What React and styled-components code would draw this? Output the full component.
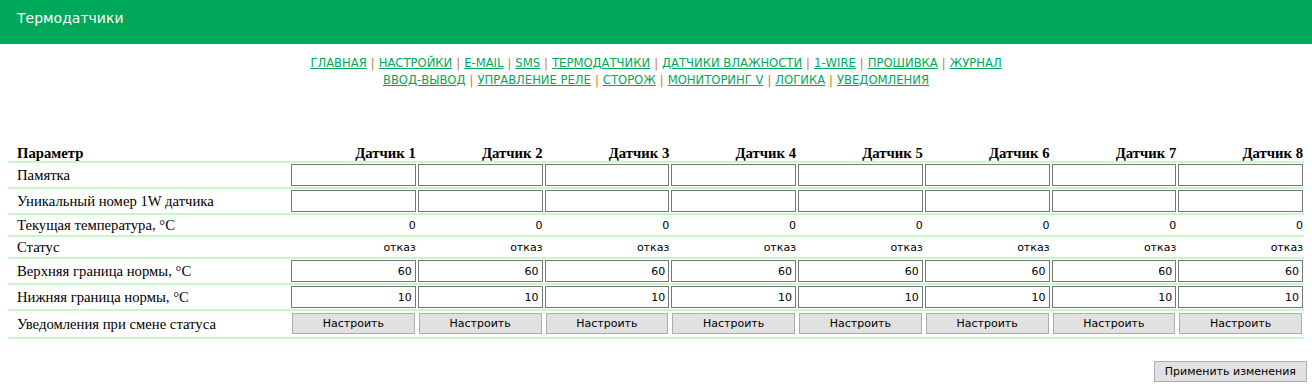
import React from 'react';
import styled, { createGlobalStyle } from 'styled-components';

const GlobalStyle = createGlobalStyle`
  body {
    margin: 0;
    background: #fff;
    font-family: "DejaVu Sans", Tahoma, sans-serif;
  }
`;

const green = '#00a85a';
const lineGreen = '#c8f8c8';

const Header = styled.div`
  height: 44px;
  background: ${green};
  color: #fff;
  font-size: 14px;
  display: flex;
  align-items: center;
  padding: 0 0 8px 17px;
  box-sizing: border-box;
`;

const Content = styled.div`
  padding: 0 8px;
`;

const Nav = styled.nav`
  margin-top: 11px;
  text-align: center;
  font-size: 11.6px;
  line-height: 17px;
`;

const NavLink = styled.a`
  color: ${green};
  text-decoration: underline;
  text-transform: uppercase;
`;

const Sep = styled.span`
  color: #c87a2a;
  margin: 0 4px;
`;

const Table = styled.table`
  width: 100%;
  margin-top: 56px;
  border-collapse: collapse;
  table-layout: fixed;
`;

const Col = styled.col`
  width: ${(p) => p.$w || 'auto'};
`;

const Th = styled.th`
  font-family: "Liberation Serif", "Times New Roman", serif;
  font-size: 14.7px;
  font-weight: bold;
  text-align: ${(p) => (p.$left ? 'left' : 'right')};
  padding: ${(p) => (p.$left ? '0 0 0 9px' : '0 1px 0 0')};
  height: 16px;
  line-height: 16px;
  border-bottom: 2px solid ${lineGreen};
`;

const Row = styled.tr`
  height: ${(p) => p.$h}px;
`;

const Label = styled.td`
  font-family: "Liberation Serif", "Times New Roman", serif;
  font-size: 14.7px;
  line-height: 17px;
  padding: 0 0 0 9px;
  border-bottom: 2px solid ${lineGreen};
  white-space: nowrap;
`;

const Cell = styled.td`
  padding: 1px;
  text-align: right;
  font-size: 11px;
  line-height: 17px;
  border-bottom: 2px solid ${lineGreen};
`;

const Field = styled.input`
  box-sizing: border-box;
  width: 100%;
  height: 22px;
  margin: 0;
  border: 1px solid #767676;
  padding: 0 3px;
  font-family: "DejaVu Sans", Tahoma, sans-serif;
  font-size: 11px;
  text-align: right;
  color: #000;
  background: #fff;
  outline: none;
`;

const Button = styled.button`
  box-sizing: border-box;
  height: 21px;
  border: 1px solid #adadad;
  background: #e1e1e1;
  font-family: "DejaVu Sans", Tahoma, sans-serif;
  font-size: 11px;
  color: #000;
  padding: 0 10px;
  margin: 0;
  cursor: pointer;
`;

const WideButton = styled(Button)`
  width: calc(100% - 2px);
  margin: 1px 1px 2px;
`;

const Footer = styled.div`
  display: flex;
  justify-content: flex-end;
  margin-top: 22px;
  margin-right: -3px;
`;

const links = [
  ['Главная', 'Настройки', 'E-mail', 'SMS', 'Термодатчики', 'Датчики влажности', '1-Wire', 'Прошивка', 'Журнал'],
  ['Ввод-вывод', 'Управление реле', 'Сторож', 'Мониторинг V', 'Логика', 'Уведомления'],
];

const sensors = [1, 2, 3, 4, 5, 6, 7, 8];

function NavLine({ items }) {
  return (
    <div>
      {items.map((t, i) => (
        <React.Fragment key={t}>
          {i > 0 && <Sep>|</Sep>}
          <NavLink href="#">{t}</NavLink>
        </React.Fragment>
      ))}
    </div>
  );
}

export default function App() {
  return (
    <>
      <GlobalStyle />
      <Header>Термодатчики</Header>
      <Content>
        <Nav>
          {links.map((l, i) => (
            <NavLine key={i} items={l} />
          ))}
        </Nav>
        <Table>
          <colgroup>
            <Col $w="282px" />
            {sensors.map((s) => (
              <Col key={s} />
            ))}
          </colgroup>
          <thead>
            <tr>
              <Th $left>Параметр</Th>
              {sensors.map((s) => (
                <Th key={s}>Датчик {s}</Th>
              ))}
            </tr>
          </thead>
          <tbody>
            <Row $h={26}>
              <Label>Памятка</Label>
              {sensors.map((s) => (
                <Cell key={s}><Field defaultValue="" /></Cell>
              ))}
            </Row>
            <Row $h={25}>
              <Label>Уникальный номер 1W датчика</Label>
              {sensors.map((s) => (
                <Cell key={s}><Field defaultValue="" /></Cell>
              ))}
            </Row>
            <Row $h={22}>
              <Label>Текущая температура, °C</Label>
              {sensors.map((s) => (
                <Cell key={s}>0</Cell>
              ))}
            </Row>
            <Row $h={22}>
              <Label>Статус</Label>
              {sensors.map((s) => (
                <Cell key={s}>отказ</Cell>
              ))}
            </Row>
            <Row $h={26}>
              <Label>Верхняя граница нормы, °C</Label>
              {sensors.map((s) => (
                <Cell key={s}><Field defaultValue="60" /></Cell>
              ))}
            </Row>
            <Row $h={26}>
              <Label>Нижняя граница нормы, °C</Label>
              {sensors.map((s) => (
                <Cell key={s}><Field defaultValue="10" /></Cell>
              ))}
            </Row>
            <Row $h={28}>
              <Label>Уведомления при смене статуса</Label>
              {sensors.map((s) => (
                <Cell key={s}><WideButton>Настроить</WideButton></Cell>
              ))}
            </Row>
          </tbody>
        </Table>
        <Footer>
          <Button>Применить изменения</Button>
        </Footer>
      </Content>
    </>
  );
}
